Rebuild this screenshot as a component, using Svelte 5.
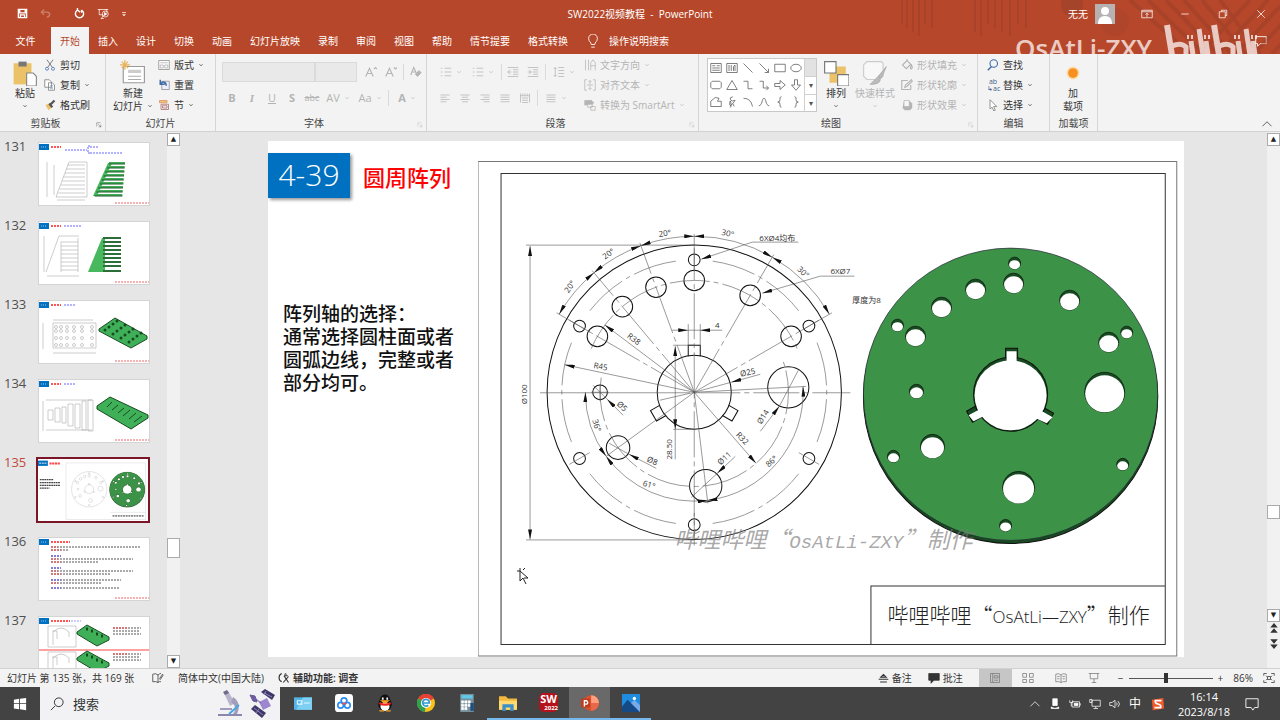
<script lang="ts">
	const tabs = ['插入', '设计', '切换', '动画', '幻灯片放映', '录制', '审阅', '视图', '帮助', '情节提要', '格式转换'];
	const slides = [131, 132, 133, 134, 135, 136, 137];
	const current = 135;
	let zoom = 44;

	// drawing geometry, centre of the flange and pixels per millimetre
	const cx = 694;
	const cy = 392;
	const mm = 2.94;

	function at(r: number, deg: number): [number, number] {
		const a = (deg * Math.PI) / 180;
		return [cx + r * mm * Math.cos(a), cy - r * mm * Math.sin(a)];
	}

	function arc(r: number, from: number, to: number) {
		const [x1, y1] = at(r, from);
		const [x2, y2] = at(r, to);
		return `M${x1} ${y1}A${r * mm} ${r * mm} 0 0 ${to > from ? 0 : 1} ${x2} ${y2}`;
	}

	function ray(r1: number, r2: number, deg: number) {
		const [x1, y1] = at(r1, deg);
		const [x2, y2] = at(r2, deg);
		return `M${x1} ${y1}L${x2} ${y2}`;
	}

	const holes = [
		...[30, 90, 150, 210, 270, 330].map((a) => [45, a, 2]),
		...[30, 60, 90, 110, 130, 150].map((a) => [38, a, 3.5]),
		[32, 180, 2.5],
		[32, 216, 4],
		[32, 277, 5.5],
		[32, 3, 7]
	];

	const plateHoles = [
		[1014, 263, 6], [1013, 283, 10], [975, 289, 10], [941, 307, 10], [915, 336, 10],
		[897, 325, 6], [1069, 300, 10], [1108, 342, 10], [1126, 332, 6], [1104, 392, 20],
		[916, 391, 7], [932, 446, 12], [1018, 487, 16], [893, 456, 6], [1122, 464, 6], [1005, 525, 6]
	];

	// leaders that end in an arrow
	const leaders = [
		'M798 242h-46l-51 17', 'M854 276h-34l-58 17', 'M672 330h16', 'M722 330h-22', 'M760 431l19-25',
		'M735 456l-18 17', 'M623 415l-16-16', 'M656 468l-27-14', 'M760 374l-29 8',
		ray(0, 38, 143), ray(0, 45, 168), ray(0, 32, 311)
	];

	const spans = [
		'M530 246v293', 'M675 346v83',
		arc(53, 90, 110), arc(53, 110, 130), arc(53, 130, 150), arc(53, 60, 90), arc(53, 30, 60),
		arc(37, 180, 216), arc(37, 216, 277), arc(37, 277, 363)
	];

	const dims: [string, number, number, number][] = [
		['20°', 665, 236, -8], ['20°', 610, 256, -36], ['20°', 572, 288, -56],
		['30°', 727, 236, 12], ['30°', 801, 274, 44], ['R38', 632, 341, 37], ['R45', 600, 369, 10],
		['Ø100', 527, 394, -90], ['Ø5', 620, 408, 45], ['36°', 594, 426, 72], ['Ø8', 651, 463, 22],
		['61°', 648, 487, 18], ['28.50', 672, 449, -90], ['Ø25', 748, 375, -12], ['4', 717, 328, 0],
		['Ø14', 765, 418, -58], ['R32', 740, 440, 46], ['86°', 773, 463, -42], ['Ø11', 726, 460, -42],
		['6XØ4均布', 777, 241, 0], ['6XØ7', 840, 274, 0], ['厚度为8', 866, 303, 0]
	];

	const grey = '#b4b4b4';
	const icons: Record<string, string> = {
		save: '<path d="M2 2h12v12H2zM4 2v5h8V2M5 14v-4h6v4" stroke-width="2"/>',
		undo: '<path d="M2 6h8q4 0 4 3.500t-4 3.500M6 2 2 6l4 4" stroke-width="2"/>',
		redo: '<path d="M5 3a6 6 0 1 0 6 0M5 3V0M5 3l4 3M11 3v4" stroke-width="2"/>',
		show: '<path d="M1 2h14M3 2v7h5M13 2v4M6 14l3-5M5 14h4"/><circle cx="11" cy="8" r="4"/><path d="m10 6 3 2-3 2z" fill="currentColor"/>',
		more: '<path d="M3 4h10" stroke-width="2"/><path d="m4 9 4 4 4-4z" fill="currentColor"/>',
		display: '<path d="M1 3h14v10H1zM1 5h14M8 12V7M6 9l2-2 2 2"/>',
		min: '<path d="M3 8h10"/>',
		restore: '<path d="M3 5h8v8H3zM6 5V3h7v7h-2"/>',
		close: '<path d="m3 3 10 10M13 3 3 13"/>',
		bulb: '<path d="M6 12c0-3-3-3-3-7a5 5 0 0 1 10 0c0 4-3 4-3 7zM6 15h4"/>',
		bubble: '<path d="M2 3h12v8H7l-3 3v-3H2z"/>',
		caret: '<path d="m4 6 4 4 4-4" stroke-width="2"/>',
		launch: '<path d="M2 12V2h10M6 6l7 7M13 7v6H7"/>',
		paste: '<path d="M1 2h11v13H1z" fill="#ebc267" stroke="none"/><path d="M4 1h5v3H4z" fill="#777" stroke="none"/><path d="M9 8h4l2 2v6H9z" fill="#fff" stroke="#888" stroke-width=".7"/>',
		cut: '<path d="M4 1l7 10M12 1 5 11" stroke="#555"/><circle cx="4" cy="13" r="2" stroke="#3f6ca8"/><circle cx="12" cy="13" r="2" stroke="#3f6ca8"/>',
		copy: '<path d="M1 1h6l3 3v7H1zM6 5h5l3 3v7H6z" fill="#fff" stroke="#777"/><path d="M8 9h4M8 11h4M8 13h4" stroke="#7b9cc4"/>',
		brush: '<path d="m2 8 5-2 4 5-5 4z" fill="#ebc267" stroke="none"/><path d="m7 6 4 5M9 7l5-5" stroke="#555" stroke-width="3"/>',
		newslide: '<path d="M2 4h13v10H2z" fill="#fff" stroke="#999" stroke-width=".7"/><path d="M5 6h8v2H5z" fill="#ccc" stroke="none"/><path d="M5 10h8M5 12h8" stroke="#aaa" stroke-width=".6"/><path d="M3 0v6M0 3h6M1 1l4 4M5 1 1 5" stroke="#e9b45b" stroke-width=".8"/>',
		layout: '<path d="M1 2h14v12H1z" fill="#fff" stroke="#888"/><path d="M3 5h10M3 8h4v4H3zM9 8h4v4H9z" stroke="#aaa"/>',
		reset: '<path d="M5 3h10v11H5z" fill="#eef" stroke="#888"/><path d="M3 1v6h6M3 7c3-5 8-3 8 2" stroke="#3f6ca8" stroke-width="2"/>',
		section: '<path d="M2 2h10v3H2z" fill="#f3c57c" stroke="#d88b55"/><path d="M4 7h10v7H4zM6 9h6v3H6z" stroke="#a66"/>',
		grow: `<path d="M1 14 6 3l5 11M3 10h6M12 4l2-2 2 2" stroke="${grey}" stroke-width="1.500"/>`,
		shrink: `<path d="M1 14 6 3l5 11M3 10h6M12 2l2 2 2-2" stroke="${grey}" stroke-width="1.500"/>`,
		eraser: `<path d="M1 12 5 2l4 9M3 8h5" stroke="${grey}" stroke-width="1.500"/><path d="m7 11 5-5 3 3-5 5z" fill="${grey}" stroke="${grey}"/>`,
		bullets: `<path d="M1 3h2M1 8h2M1 13h2M6 3h9M6 8h9M6 13h9" stroke="${grey}"/>`,
		outdent: `<path d="M1 2h14M8 5h7M8 8h7M8 11h7M1 14h14M6 8H1M4 5 1 8l3 3" stroke="${grey}"/>`,
		indent: `<path d="M1 2h14M8 5h7M8 8h7M8 11h7M1 14h14M1 8h5M3 5l3 3-3 3" stroke="${grey}"/>`,
		spacing: `<path d="M7 2h8M7 6h8M7 10h8M7 14h8M3 2v12M1 4l2-2 2 2M1 12l2 2 2-2" stroke="${grey}"/>`,
		left: `<path d="M2 4h12M2 7h8M2 10h12M2 13h8" stroke="${grey}"/>`,
		center: `<path d="M2 4h12M4 7h8M2 10h12M4 13h8" stroke="${grey}"/>`,
		right: `<path d="M2 4h12M6 7h8M2 10h12M6 13h8" stroke="${grey}"/>`,
		justify: `<path d="M2 4h12M2 7h12M2 10h12M2 13h12" stroke="${grey}"/>`,
		spread: `<path d="M2 2v12M14 2v12M2 5h12M4 8h8M4 11h8M4 14h8M5 2v3M8 2v3M11 2v3" stroke="${grey}"/>`,
		direction: `<path d="M2 1v14M6 1v14M9 15V5l3-4 3 4v10M9 9h6" stroke="${grey}"/>`,
		align: `<path d="M4 1H1v14h3M12 1h3v14h-3M8 2v5M6 4l2-2 2 2M8 14V9M6 12l2 2 2-2M4 8h8" stroke="${grey}"/>`,
		smart: `<path d="M1 2h9l3 3-3 3H1z" fill="${grey}" stroke="${grey}"/><path d="M5 7h6v4H5zM9 10h6v5H9z" fill="#f3f3f3" stroke="${grey}"/>`,
		arrange: '<path d="M8 4h6v6H8zM4 8h6v6H4z" fill="#ebc267" stroke="none"/><path d="M1 1h7v7H1zM9 9h7v7H9z" fill="#fff" stroke="#777" stroke-width=".7"/>',
		quick: `<path d="M3 1h9l1 1v8l-3 2H3l-2-2V3z" fill="#f8f8f8" stroke="#ccc" stroke-width=".7"/><path d="m15 4-3 7-2-1zM10 10q2 1 1 3t-6 2q3-3 5-5z" fill="#bbb" stroke="#aaa" stroke-width=".5"/>`,
		fill: `<path d="m3 7 5-5 5 5-6 6-5-5zM8 2V0M14 8q2 4 0 5t-1-3z" stroke="${grey}" stroke-width="1.500"/>`,
		outline: `<path d="M9 2H1v12h12V8M5 11l1-3 8-7 1 2-7 7z" stroke="${grey}" stroke-width="1.500"/>`,
		effect: `<path d="M4 3h8l3 3v6l-3 3H5l-3-3z" fill="${grey}" stroke="none"/><path d="M4 2h7v8H4z" fill="#f6f6f6" stroke="${grey}"/>`,
		find: '<circle cx="9" cy="6" r="5" stroke="#3f6ca8" stroke-width="1.500"/><path d="m6 10-5 5" stroke="#3f6ca8" stroke-width="2"/>',
		pointer: '<path d="m4 1 9 9H9l2 5-2 1-2-5-3 2z" fill="#fff" stroke="#777"/>',
		sun: '<circle cx="8" cy="8" r="4" fill="#fbdcab" stroke="none"/><circle cx="8" cy="8" r="3" fill="#f7901e" stroke="none"/>',
		up: '<path d="m2 11 6-6 6 6"/>',
		jumpUp: '<path d="m8 0 5 6H3zM8 7l5 6H3z" fill="#333" stroke="none"/>',
		jumpDown: '<path d="m8 9 5-6H3zM8 16l5-6H3z" fill="#333" stroke="none"/>',
		book: '<path d="M8 4Q5 1 1 3v10q4-1 7 1 2-2 4-1M8 4v10M8 4q2-2 4-2M10 9l4-6 1 1-4 6z"/>',
		access: '<path d="M5 2a6 6 0 0 0 0 11M8 5l6 9M14 6l-7 8M8 5h5" stroke-width="1.500"/><circle cx="10" cy="3" r="1"/>',
		notes: '<path d="M1 9h14M3 13h10M4 6l4-4 4 4z" stroke-width="1.500"/>',
		comment: '<path d="M1 2h14v9H8l-4 4v-4H1z" fill="currentColor"/>',
		normal: '<path d="M2 2h12v12H2zM5 2v12M7 5h5v3H7zM7 11h5"/>',
		sorter: '<path d="M1 2h5v5H1zM10 2h5v5h-5zM1 10h5v4H1zM10 10h5v4h-5z"/>',
		reading: '<path d="M8 4Q5 1 1 3v10q4-1 7 1 3-2 7-1V3q-4-2-7 1v10M3 6h3M3 9h3M10 6h3M10 9h3"/>',
		present: '<path d="M1 2h14M3 2v7h10V2M8 9v5M5 14h6"/>',
		fit: '<path d="M1 5V2h4M11 2h4v3M15 11v3h-4M5 14H1v-3M4 5l2 2M12 5l-2 2M4 11l2-2M12 11l-2-2M6 6h4v4H6z"/>',
		windows: '<path d="m1 3 6-1v5H1zM8 2l7-1v6H8zM1 8h6v6l-6-1zM8 8h7v7l-7-1z" fill="#fff" stroke="none"/>',
		search: '<circle cx="10" cy="6" r="5"/><path d="m6 10-5 5"/>',
		card: '<path d="M0 3h16v11H0z" fill="#52b7e8" stroke="none"/><path d="M8 3h8v11H2z" fill="#7dd0f2" stroke="none"/><path d="M3 6h4v3H3zM9 8h5" stroke="#e6f6ff"/>',
		cloud: '<rect width="16" height="16" rx="3" fill="#fff" stroke="none"/><circle cx="5" cy="10" r="2.500" stroke="#2b8cf0" stroke-width="1.500"/><circle cx="11" cy="10" r="2.500" stroke="#2b8cf0" stroke-width="1.500"/><circle cx="8" cy="6" r="2.500" stroke="#2b8cf0" stroke-width="1.500"/><path d="M7 9a2 2 0 0 1 3 0" stroke="#f04f5a" stroke-width="1.500"/>',
		qq: '<ellipse cx="8" cy="9" rx="6" ry="6" fill="#111" stroke="none"/><circle cx="8" cy="5" r="4.500" fill="#111" stroke="none"/><ellipse cx="8" cy="11" rx="4" ry="4" fill="#fff" stroke="none"/><path d="M3 8q5 3 10 0" stroke="#e22" stroke-width="2"/><path d="M6 3v2M10 3v2" stroke="#fff" stroke-width="1.500"/><path d="M5 6h6l-3 2zM3 15h4M9 15h4" fill="#f5a623" stroke="#f5a623"/>',
		chrome: '<circle cx="8" cy="8" r="8" fill="#fbc116" stroke="none"/><path d="M8 8 1 4a8 8 0 0 1 14 0z" fill="#e64132" stroke="none"/><path d="M8 8 1 4a8 8 0 0 0 6 12z" fill="#2fa14f" stroke="none"/><circle cx="8" cy="8" r="4.500" fill="#fff" stroke="none"/><path d="M5 8h6a3 3 0 1 0-1 2" stroke="#2f9bd0" stroke-width="1.500"/>',
		calc: '<path d="M2 0h12v16H2z" fill="#77909d" stroke="none"/><path d="M3 1h10v3H3z" fill="#5fc9e8" stroke="none"/><path d="M3 6h2v2H3zM6 6h2v2H6zM9 6h2v2H9zM3 9h2v2H3zM6 9h2v2H6zM9 9h2v2H9zM3 12h2v2H3zM6 12h2v2H6z" fill="#fff" stroke="#fff" stroke-width=".5"/><path d="M11 8h3v7h-3z" fill="#1e4d80" stroke="none"/>',
		folder: '<path d="M0 2h6l2 2h8v10H0z" fill="#f3b83d" stroke="none"/><path d="M0 6h16v8H0z" fill="#ffd972" stroke="none"/><path d="M3 15V9h10v6h-3v-3H6v3z" fill="#3c8fc7" stroke="none"/>',
		powerpoint: '<circle cx="9" cy="8" r="7" fill="#d9522f" stroke="none"/><path d="M9 1a7 7 0 0 1 7 7H9z" fill="#ff9f80" stroke="none"/><path d="M9 15a7 7 0 0 0 7-7H9z" fill="#e8694a" stroke="none"/><rect y="4" width="8" height="8" rx="1" fill="#bf3c1d" stroke="none"/><path d="M3 11V6h2q2 2 0 3H3" stroke="#fff" stroke-width="1.200"/>',
		photos: '<path d="M0 0h16v16H0z" fill="#1e8de0" stroke="none"/><path d="m0 11 5-6 11 11H0z" fill="#154a86" stroke="none"/><path d="m8 8 3-3 5 5v6z" fill="#7aa9e8" stroke="none"/><circle cx="11" cy="4" r="1.500" fill="#fff" stroke="none"/>',
		mic: '<path d="M5 1h6v9H5z" fill="#fff"/><path d="M3 12q5 4 10 0v2H3z" fill="#fff"/>',
		battery: '<path d="M4 5h10v7H4zM15 7v3M1 3v3h4V3M3 6v5"/><path d="M7 7h5v3H7z" fill="currentColor"/>',
		network: '<path d="M4 3h11v8H4zM9 11v3M6 14h6M1 2h3v4H1z"/>',
		sound: '<path d="M1 6h3l4-3v10L4 10H1zM10 6q2 2 0 4M12 4q4 4 0 8"/>',
		sogou: '<path d="m1 3 13-2 1 12-13 2z" fill="#ee5a2b" stroke="none"/><path d="M12 4H5q-1 3 3 4t3 4H4" stroke="#fff" stroke-width="2"/>',
		note: '<path d="M1 2h14v10h-4l-2 3-2-3H1z"/>'
	};

	const shapes = [
		'M1 2h14v12H1zM3 5h4M9 5h4M3 8h10M3 11h10', 'M1 2h14v12H1zM4 4v8M7 4v8M10 12V6l2-2v8',
		'm2 2 12 12', 'm2 2 12 12M14 9v5H9', 'M1 3h14v10H1z', 'M1 8a7 5 0 1 0 14 0a7 5 0 1 0-14 0',
		'M3 3h10l2 2v6l-2 2H3l-2-2V5z', 'M8 2 15 14H1z', 'M2 3h6v10h6', 'M2 3h5v9h7M11 9l3 3-3 3',
		'M1 6h7V2l7 6-7 6v-4H1z', 'M6 1h4v7h4l-6 7-6-7h4z',
		'M1 7l6-5 5 1-2 4h5v7H1z', 'M9 1Q4 2 6 5t5 1-2 4-4-1 2 5l-2 1M9 10l2 4', 'M2 3q10 0 12 11',
		'M1 13C6 13 5 3 8 3s2 10 7 10', 'M10 1Q7 1 8 5 8 8 5 8 8 8 8 11 7 15 10 15', 'M6 1Q9 1 8 5 8 8 11 8 8 8 8 11 9 15 6 15'
	];

	const apps = ['card', 'cloud', 'qq', 'chrome', 'calc', 'folder', 'solidworks', 'powerpoint', 'photos'];
	const running = ['folder', 'solidworks', 'powerpoint', 'photos'];
</script>

{#snippet icon(name: string, size = '')}
	<svg class="icon {size}" viewBox="0 0 16 16" aria-hidden="true">{@html icons[name]}</svg>
{/snippet}

{#snippet command(name: string, label: string, caret = false)}
	<button class="command">
		{@render icon(name, 'mid')}
		<span>{label}</span>
		{#if caret}{@render icon('caret', 'tiny')}{/if}
	</button>
{/snippet}

{#snippet outline()}
	<g class="solid">
		<circle {cx} {cy} r="147" />
		{#each holes as [r, a, size]}
			<circle cx={at(r, a)[0]} cy={at(r, a)[1]} r={size * mm} />
		{/each}
		<circle {cx} {cy} r="37" />
		{#each [0, 120, 240] as turn}
			<path d="M688 356V345H700V356" transform="rotate({turn} {cx} {cy})" />
		{/each}
	</g>
{/snippet}

{#snippet plate()}
	<ellipse cx="1010" cy="397" rx="147" ry="146" fill="#174a20" stroke="#111" />
	<ellipse cx="1010" cy="394" rx="147" ry="146" fill="#3c9347" stroke="#223" stroke-width=".7" />
	{#each plateHoles as [x, y, r]}
		<circle cx={x} cy={y} {r} fill="#174a20" stroke="#111" stroke-width=".7" />
		<ellipse cx={x} cy={y + 1.5} rx={r - 0.5} ry={r - 1.5} fill="#fff" />
	{/each}
	<path d="M1005 348h12v14h-12zM966 411l14-8 6 11-14 8zM1053 413l-14-8-6 11 14 8z" fill="#174a20" stroke="#111" />
	<circle cx="1010" cy="394" r="37" fill="#174a20" stroke="#111" />
	<path d="M1006 351h10v14h-10zM968 415l13-7 4 7-12 6zM1052 417l-14-8-5 8 13 6z" fill="#fff" />
	<ellipse cx="1010" cy="395" rx="36" ry="35" fill="#fff" />
{/snippet}

<div class="window">
	<header>
		<svg class="streaks" viewBox="0 0 400 54" aria-hidden="true">
			<g stroke="#96402b" stroke-width="2" opacity=".45">
				{#each [22, 27, 33, 39, 45, 52, 95, 101, 108, 115, 122, 130, 138, 146] as x, i}
					<path d="M{x} 0V{24 + (i % 4) * 4}" />
				{/each}
				{#each [0, 1, 2, 3, 4, 5] as i}
					<path d="M{250 + i * 18} 0l{60 - i * 4} 54M{320 + i * 18} 54 {370 + i * 18} 0" stroke-width="4" />
				{/each}
			</g>
			<circle cx="192" cy="5" r="11" fill="#96402b" opacity=".5" />
			<circle cx="235" cy="22" r="14" fill="#96402b" opacity=".25" />
		</svg>
		<div class="titlebar">
			<div class="quick">
				<button aria-label="保存">{@render icon('save', 'small')}</button>
				<button class="faded" aria-label="撤消">{@render icon('undo', 'small')}</button>
				<button aria-label="重复">{@render icon('redo', 'small')}</button>
				<button aria-label="放映">{@render icon('show', 'mid')}</button>
				<button aria-label="自定义">{@render icon('more', 'tiny')}</button>
			</div>
			<div class="title">SW2022视频教程&nbsp; -&nbsp; PowerPoint</div>
			<div class="account">
				<span>无无</span>
				<svg class="avatar" viewBox="0 0 20 20" aria-hidden="true">
					<path d="M0 0h20v20H0z" fill="#b5b2b1" />
					<circle cx="10" cy="7" r="4" fill="#fff" />
					<path d="M3 20q0-8 7-8t7 8z" fill="#fff" />
				</svg>
				<button aria-label="功能区显示选项">{@render icon('display', 'mid')}</button>
				<button aria-label="最小化">{@render icon('min', 'mid')}</button>
				<button aria-label="还原">{@render icon('restore', 'mid')}</button>
				<button aria-label="关闭">{@render icon('close', 'mid')}</button>
			</div>
		</div>
		<nav>
			<button class="file">文件</button>
			<button class="open">开始</button>
			{#each tabs as tab}
				<button>{tab}</button>
			{/each}
			<button class="tell">{@render icon('bulb', 'big')}操作说明搜索</button>
			<button class="feedback" aria-label="批注">{@render icon('bubble', 'big')}</button>
		</nav>
		<div class="brand">
			<span>OsAtLi-ZXY</span>
			<svg viewBox="0 0 95 32" aria-hidden="true">
				{#each [0, 47] as shift}
					<g transform="translate({shift} 0)">
						<path d="M4 1 9 31" stroke-width="6" />
						<path d="M9 22q9-4 14 1v9M28 17l2 14M36 5l4 26M43 17l2 14" stroke-width="5" />
						<path d="M25 11v4M29 11v4M42 11v4M46 11v4" stroke-width="2" />
					</g>
				{/each}
			</svg>
		</div>
	</header>

	<section class="ribbon">
		<div class="group">
			<div class="body clip clipboard">
				<button class="large">{@render icon('paste', 'huge')}<span>粘贴</span>{@render icon('caret', 'tiny')}</button>
				<div class="stack">
					{@render command('cut', '剪切')}
					{@render command('copy', '复制', true)}
					{@render command('brush', '格式刷')}
				</div>
			</div>
			<footer>剪贴板</footer>
			<span class="launch">{@render icon('launch', 'tiny')}</span>
		</div>
		<div class="group">
			<div class="body clip pages">
				<button class="large">{@render icon('newslide', 'huge')}<span>新建</span><span class="line">幻灯片{@render icon('caret', 'tiny')}</span></button>
				<div class="stack">
					{@render command('layout', '版式', true)}
					{@render command('reset', '重置')}
					{@render command('section', '节', true)}
				</div>
			</div>
			<footer>幻灯片</footer>
		</div>
		<div class="group off">
			<div class="body rows">
				<div class="row">
					<select class="family" aria-label="字体" disabled><option></option></select>
					<select class="points" aria-label="字号" disabled><option></option></select>
					<button disabled aria-label="增大字号">{@render icon('grow', 'mid')}</button>
					<button disabled aria-label="减小字号">{@render icon('shrink', 'mid')}</button>
					<i class="rule"></i>
					<button disabled aria-label="清除格式">{@render icon('eraser', 'mid')}</button>
				</div>
				<div class="row letters">
					<button disabled><b>B</b></button>
					<button disabled><em>I</em></button>
					<button disabled><u>U</u></button>
					<button disabled><b>S</b></button>
					<button disabled><s>abc</s></button>
					<button class="wide" disabled>AV{@render icon('caret', 'tiny')}</button>
					<button class="wide" disabled>Aa{@render icon('caret', 'tiny')}</button>
					<i class="rule"></i>
					<button class="wide" disabled><b>A</b>{@render icon('caret', 'tiny')}</button>
				</div>
			</div>
			<footer>字体</footer>
			<span class="launch">{@render icon('launch', 'tiny')}</span>
		</div>
		<div class="group off">
			<div class="body clip para">
				<div class="rows">
					<div class="row">
						<button class="wide" disabled aria-label="项目符号">{@render icon('bullets', 'mid')}{@render icon('caret', 'tiny')}</button>
						<button class="wide" disabled aria-label="编号">{@render icon('bullets', 'mid')}{@render icon('caret', 'tiny')}</button>
						<i class="rule"></i>
						<button disabled aria-label="降低级别">{@render icon('outdent', 'mid')}</button>
						<button disabled aria-label="提高级别">{@render icon('indent', 'mid')}</button>
						<i class="rule"></i>
						<button class="wide" disabled aria-label="行距">{@render icon('spacing', 'mid')}{@render icon('caret', 'tiny')}</button>
					</div>
					<div class="row">
						{#each ['left', 'center', 'right', 'justify', 'spread'] as name}
							<button disabled aria-label={name}>{@render icon(name, 'mid')}</button>
						{/each}
						<i class="rule"></i>
						<button class="wide" disabled aria-label="分栏">{@render icon('justify', 'mid')}{@render icon('caret', 'tiny')}</button>
					</div>
				</div>
				<div class="stack">
					{@render command('direction', '文字方向', true)}
					{@render command('align', '对齐文本', true)}
					{@render command('smart', '转换为 SmartArt', true)}
				</div>
			</div>
			<footer>段落</footer>
			<span class="launch">{@render icon('launch', 'tiny')}</span>
		</div>
		<div class="group">
			<div class="body clip draw">
				<div class="gallery">
					<div class="shapes">
						{#each shapes as d}
							<svg class="icon mid" viewBox="0 0 16 16" aria-hidden="true"><path {d} /></svg>
						{/each}
					</div>
					<div class="spin"><span></span><span>▾</span><span>▾</span></div>
				</div>
				<button class="large">{@render icon('arrange', 'huge')}<span>排列</span>{@render icon('caret', 'tiny')}</button>
				<button class="large off">{@render icon('quick', 'huge')}<span>快速样式</span>{@render icon('caret', 'tiny')}</button>
				<div class="stack off">
					{@render command('fill', '形状填充', true)}
					{@render command('outline', '形状轮廓', true)}
					{@render command('effect', '形状效果', true)}
				</div>
			</div>
			<footer>绘图</footer>
			<span class="launch off">{@render icon('launch', 'tiny')}</span>
		</div>
		<div class="group">
			<div class="body stack edit">
				{@render command('find', '查找')}
				<button class="command"><span class="swap">ab<br />↳ac</span><span>替换</span>{@render icon('caret', 'tiny')}</button>
				{@render command('pointer', '选择', true)}
			</div>
			<footer>编辑</footer>
		</div>
		<div class="group">
			<div class="body clip addin">
				<button class="large">{@render icon('sun', 'huge')}<span>加</span><span class="line">载项</span></button>
			</div>
			<footer>加载项</footer>
		</div>
		<button class="collapse" aria-label="折叠功能区">{@render icon('up', 'mid')}</button>
	</section>

	<main>
		<aside>
			{#each slides as n}
				<div class="slot" class:current={n === current}>
					<span>{n}</span>
					{#if n === current}
						<svg class="thumb" viewBox="268 141 915 515" aria-hidden="true">
							<path d="M268 154h82v44h-82z" fill="#0070c0" />
							<path d="M278 176h60" stroke="#9cc6e6" stroke-width="12" stroke-dasharray="16 6" />
							<path d="M363 178h89" stroke="#f44" stroke-width="16" stroke-dasharray="18 5" />
							<path d="M283 313h115M283 337h171M283 360h171M283 383h80" stroke="#444" stroke-width="10" stroke-dasharray="15 4" />
							<path d="M501 173h663v471H501zM870 585h294" fill="none" stroke="#aaa" stroke-width="2" />
							<path d="M888 614h258" stroke="#888" stroke-width="14" stroke-dasharray="16 6" />
							{@render outline()}
							{@render plate()}
						</svg>
					{:else}
						<svg class="thumb" viewBox="0 0 110 62" aria-hidden="true">
							<path d="M0 1h10v6H0z" fill="#0070c0" />
							<path d="M2 4h6" stroke="#9cc6e6" stroke-dasharray="1 1" />
							<path d="M12 4h{n > 135 ? 19 : 10}" stroke="#f55" stroke-width="2" stroke-dasharray="2 1" />
							{#if n < 136}
								<path d="M{n === 131 ? 26 : 25} {n === 131 ? 7 : 4}h{n === 131 ? 22 : n === 132 ? 17 : 11}" stroke="#66f" stroke-dasharray="2 1" />
							{/if}
							{#if n < 137}
								<path d="M76 60h34" stroke="#e66" stroke-dasharray="2 1" />
							{/if}
							{#if n === 131}
								<path d="M51 3h-2v7h2M51 4h9M51 10h33" class="blue" />
								<path d="M8 19v35M17 54 30 19h18v35zM18 57h28M15 22v30" class="thin" />
								{#each [22, 26, 30, 34, 38, 42, 46, 50] as y}<path d="M{36 - y / 3} {y}H46" class="thin" />{/each}
								<path d="M54 53 69 20h4L58 53z" fill="#48b85e" />
								{#each [0, 1, 2, 3, 4, 5, 6, 7, 8] as i}
									<path d="M{70 - i * 1.8} {20 + i * 4}H{86 - i / 3}" stroke="#43ad59" stroke-width="2" />
									<path d="M{70 - i * 1.8} {21 + i * 4}H{86 - i / 3}" stroke="#205a2c" stroke-width="1" />
								{/each}
							{:else if n === 132}
								<path d="M5 14v36M7 50 20 14h20M22 20v30M39 16v34M8 54h32" class="thin" />
								{#each [20, 24, 28, 32, 36, 40, 44, 48] as y}<path d="M22 {y}H39" class="thin" />{/each}
								<path d="M49 50 63 16h3v34z" fill="#48b85e" />
								{#each [16, 20, 24, 28, 32, 36, 40, 44, 49] as y}<path d="M64 {y}H82" stroke="#2d6d3a" stroke-width="2" />{/each}
							{:else if n === 133}
								<path d="M14 22h43v25H14zM4 22v26M14 52h43M14 19h40" class="thin" />
								{#each [17, 22, 28, 35, 43, 53] as x}
									{#each [26, 30, 37, 44] as y}<circle cx={x} cy={y} r="1.500" class="thin" />{/each}
								{/each}
								<path d="m60 28 16-11 32 18v3L92 47 60 30z" fill="#3fb058" stroke="#1c4d27" />
								{#each [0, 1, 2, 3] as r}
									{#each [0, 1, 2, 3] as c}<circle cx={66 + c * 8 + r * 4} cy={29 + c * 4 - r * 3} r="1.500" fill="#174a20" />{/each}
								{/each}
							{:else if n === 134}
								<path d="M4 21v30M7 20h46M7 50h46M9 30h5v10H9zM16 28h5v14h-5zM23 27h4v16h-4zM29 24h5v22h-5zM36 24h5v24h-5zM43 21h4v29h-4zM49 20h5v31h-5z" class="thin" />
								<path d="m58 26 13-9 38 18v3L92 49 58 29z" fill="#3fb058" stroke="#174a20" />
								<path d="M73 22l-5 5M79 25l-6 5M85 28l-6 5M91 30l-7 6M97 33l-7 6M103 36l-8 6" stroke="#174a20" stroke-width="1" fill="none" />
							{:else if n === 136}
								{#each [9, 12, 18, 21, 24, 30, 33, 36, 42, 45, 50] as y, i}
									<path d="M12 {y}h{[90, 18, 10, 82, 48, 10, 82, 60, 70, 50, 68][i]}" stroke="#555" stroke-dasharray="2 1" />
									<path d="M12 {y}h{i % 3 ? 10 : 7}" stroke={[2, 5, 8, 10].includes(i) ? '#55f' : '#f44'} stroke-dasharray="2 1" />
								{/each}
							{:else}
								<path d="M32 4h10" stroke="#99f" stroke-dasharray="2 1" />
								<path d="M0 33h110" stroke="#f44" />
								{#each [0, 26] as y}
									<g transform="translate(0 {y})">
										<path d="M9 9h28v21H9zM14 28V15q8-8 16 0v5M13 14h5v8" class="thin" />
										<path d="m38 15 10-7 22 12v3l-12 6-20-12z" fill="#3fb058" stroke="#1c4d27" />
										<path d="M47 12h2M52 14h2M57 17h2M62 19h2" stroke="#174a20" stroke-width="3" />
										<path d="M74 11h28M74 14h26M74 17h28" stroke="#555" stroke-dasharray="2 1" />
										<path d="M74 11h14" stroke="#f44" stroke-dasharray="2 1" />
									</g>
								{/each}
							{/if}
						</svg>
					{/if}
				</div>
			{/each}
		</aside>
		<div class="scroll">
			<button aria-label="向上">▲</button>
			<i class="before"></i><i class="grip"></i><i class="after"></i>
			<button aria-label="向下">▼</button>
		</div>

		<div class="stage">
			<article class="slide">
				<div class="notes">
					<div class="heading">
						<span class="badge">4-39</span>
						<h1>圆周阵列</h1>
					</div>
					<p>阵列轴的选择：<br />通常选择圆柱面或者<br />圆弧边线，完整或者<br />部分均可。</p>
				</div>
				<svg class="drawing" viewBox="478 141 705 515">
					<defs>
						<marker id="tip" viewBox="0 0 10 4" refX="10" refY="2" markerWidth="10" markerHeight="4" markerUnits="userSpaceOnUse" orient="auto-start-reverse">
							<path d="M0 0 10 2 0 4z" fill="#111" />
						</marker>
					</defs>
					<path d="M478 161.500h698v494H478z" fill="none" stroke="#777" />
					<path d="M501 173.500h663.500v470.500H501zM870.500 644V585.500H1164" fill="none" stroke="#333" />
					{@render plate()}
					{@render outline()}
					<g class="thin">
						<path d="M526 245h168M526 539.500h168M540 392.500h150" />
						<path d="M694 392.500H850M694 234V545" stroke-dasharray="46 4 5 4" />
						<path d={arc(38, 157, 23)} stroke-dasharray="40 4 5 4" />
						<path d="{arc(32, 171, 277)}{arc(32, 277, 380)}" stroke-dasharray="44 4 5 4" />
						{#each [0, 60, 120, 180, 240, 300] as a}
							<path d="{arc(45, a + 38, a + 57)}{arc(45, a + 59, a + 61)}{arc(45, a + 63, a + 82)}" />
							<path d={ray(41, 49, a + 30)} />
						{/each}
						{#each [30, 60, 110, 130, 150] as a}
							<path d={ray(0, 54, a)} stroke-dasharray="50 4 5 4" />
						{/each}
						<path d="{ray(0, 37, 216)}{ray(0, 38, 277)}{ray(0, 38, 3)}{ray(0, 12, 193)}{ray(29, 35, 180)}" />
						<path d="M600 384v17M673 345h21M673 429h21M675 429v30M688 324v21M700 324v21M688 330h12" />
						<path d="M607 399l-14-14M629 454l-20-11M717 473l-26 24M779 406l19-36M694 392l37-10" />
					</g>
					{#each leaders as d}
						<path {d} class="thin" marker-end="url(#tip)" />
					{/each}
					{#each spans as d}
						<path {d} class="thin" marker-start="url(#tip)" marker-end="url(#tip)" />
					{/each}
					{#each dims as [label, x, y, turn]}
						<text class="dim" {x} {y} transform="rotate({turn} {x} {y})">{label}</text>
					{/each}
					<text class="water" x="674" y="548">哔哩哔哩“<tspan>OsAtLi-ZXY</tspan>”制作</text>
					<text class="maker" x="887" y="622">哔哩哔哩“<tspan>OsAtLi—ZXY</tspan>”制作</text>
				</svg>
			</article>
			<svg class="cursor" viewBox="0 0 16 20" aria-hidden="true">
				<path d="M4 5v10l3-3 3 6M4 5l8 7H8M1 5h3M4 2v3M7 4l2-2" fill="none" stroke="#222" />
			</svg>
		</div>
		<div class="scroll right">
			<button aria-label="上一页">▲</button>
			<i class="before"></i><i class="grip"></i><i class="after"></i>
			<button aria-label="下一页">▼</button>
			<button class="jump" aria-label="上一张幻灯片">{@render icon('jumpUp', 'mid')}</button>
			<button class="jump" aria-label="下一张幻灯片">{@render icon('jumpDown', 'mid')}</button>
		</div>
	</main>

	<div class="status">
		<span class="count">幻灯片 第 135 张，共 169 张</span>
		{@render icon('book', 'mid')}
		<span class="lang">简体中文(中国大陆)</span>
		{@render icon('access', 'mid')}
		<b>辅助功能: 调查</b>
		<div class="views">
			<button class="text">{@render icon('notes', 'small')}备注</button>
			<button class="text">{@render icon('comment', 'mid')}批注</button>
			<button class="view active" aria-label="普通">{@render icon('normal', 'mid')}</button>
			<button class="view" aria-label="浏览">{@render icon('sorter', 'mid')}</button>
			<button class="view" aria-label="阅读">{@render icon('reading', 'mid')}</button>
			<button class="view" aria-label="放映">{@render icon('present', 'mid')}</button>
			<button class="minus" aria-label="缩小">−</button>
			<input type="range" min="0" max="100" bind:value={zoom} aria-label="缩放" />
			<button aria-label="放大">+</button>
			<span class="percent">86%</span>
			<button aria-label="适应窗口">{@render icon('fit', 'mid')}</button>
		</div>
	</div>

	<div class="taskbar">
		<button class="start" aria-label="开始菜单">{@render icon('windows', 'big')}</button>
		<label class="search">
			{@render icon('search', 'big')}
			<input type="text" placeholder="搜索" aria-label="搜索" />
			<svg class="promo" viewBox="0 0 60 30" aria-hidden="true">
				<path d="M2 27h24v-2H2z" fill="#8d86ad" />
				<path d="m8 4 4-2 7 12-5 3z" fill="#b9b6cc" />
				<path d="m7 3 4-2 2 3-4 2z" fill="#6f6a8c" />
				<path d="M17 8q9 6 4 17h-4q5-7-2-12zM4 19h12v2H4z" fill="#a19dbc" />
				<path d="m13 25 10-9" stroke="#49a5e0" stroke-width="2" />
				<path d="m43 13 8-4 4 8-8 4z" fill="#9c87cf" />
				<path d="m45 3 4-3 10 6-3 5zM35 20l4-4 11 8-4 5z" fill="#3f3767" />
				<path d="m48 4 8 4M38 19l9 7M50 2l-2 4M43 20l-3 4" stroke="#8e84bd" />
				<path d="m34 6 5 1 2 6-4-1zM40 10l5 4" fill="#6c5b9e" stroke="#6c5b9e" />
			</svg>
		</label>
		{#each apps as app}
			<button class="app" class:running={running.includes(app)} class:focus={app === 'powerpoint'} aria-label={app}>
				{#if app === 'solidworks'}
					<span class="sw"><b>SW</b><small>2022</small></span>
				{:else}
					{@render icon(app, 'app-icon')}
				{/if}
			</button>
		{/each}
		<div class="tray">
			{#each ['up', 'mic', 'battery', 'network', 'sound'] as name}
				{@render icon(name, 'mid')}
			{/each}
			<span class="ime">中</span>
			{@render icon('sogou', 'big')}
			<time>16:14<br />2023/8/18</time>
			{@render icon('note', 'big')}
		</div>
	</div>
</div>

<style>
	:global(body) {
		margin: 0;
	}

	.window {
		display: flex;
		flex-direction: column;
		height: 100vh;
		overflow: hidden;
		background: #e6e6e6;
		color: #333;
		font: 10px/14px 'Open Sans', 'Noto Sans CJK SC', sans-serif;
	}

	button {
		display: flex;
		align-items: center;
		justify-content: center;
		padding: 0;
		border: 0;
		background: none;
		color: inherit;
		font: inherit;
		white-space: nowrap;
	}

	.icon {
		display: block;
		flex: none;
		width: 12px;
		height: 12px;
		fill: none;
		stroke: currentColor;
	}

	.icon.tiny {
		width: 6px;
		height: 6px;
	}

	.icon.small {
		width: 11px;
		height: 11px;
	}

	.icon.big {
		width: 14px;
		height: 14px;
	}

	.icon.huge {
		width: 26px;
		height: 26px;
	}

	.icon.app-icon {
		width: 18px;
		height: 18px;
	}

	/* title bar and tabs */
	header {
		position: relative;
		flex: none;
		background: #b7472a;
		color: #fff;
		overflow: hidden;
	}

	.streaks {
		position: absolute;
		top: 0;
		right: 0;
		width: 400px;
		height: 54px;
	}

	.titlebar {
		position: relative;
		display: grid;
		grid-template-columns: 1fr auto 1fr;
		align-items: center;
		height: 27px;
	}

	.quick {
		display: flex;
		gap: 12px;
		padding-left: 17px;
	}

	.quick .faded {
		width: 22px;
		justify-content: flex-start;
		opacity: 0.3;
	}

	.account {
		display: flex;
		align-items: center;
		justify-content: flex-end;
		padding-right: 13px;
	}

	.account button {
		width: 12px;
		margin-left: 26px;
	}

	.account .avatar {
		width: 20px;
		height: 20px;
		margin-left: 7px;
	}

	nav {
		display: flex;
		height: 27px;
	}

	nav button {
		padding: 0 9px;
	}

	nav .file {
		width: 51px;
	}

	nav .open {
		background: #f3f3f3;
		color: #b7472a;
	}

	nav .tell {
		gap: 9px;
	}

	nav .feedback {
		margin-left: auto;
		padding-right: 12px;
	}

	.brand {
		position: absolute;
		top: 24px;
		right: 22px;
		display: flex;
		gap: 11px;
		color: #fff;
		font: 600 26px/48px 'Open Sans', sans-serif;
		opacity: 0.72;
	}

	.brand svg {
		width: 95px;
		height: 32px;
		fill: none;
		stroke: #fff;
	}

	/* ribbon */
	.ribbon {
		position: relative;
		display: grid;
		grid-template-columns: 106px 110px 211px 272px 279px 72px 48px 1fr;
		flex: none;
		height: 77px;
		border-bottom: 1px solid #d2d2d2;
		background: #f3f3f3;
	}

	.group {
		position: relative;
		border-right: 1px solid #d6d6d6;
	}

	.group footer {
		height: 16px;
		line-height: 16px;
		text-align: center;
		color: #444;
	}

	.group:has(.launch) footer {
		padding-right: 14px;
	}

	.launch {
		position: absolute;
		right: 3px;
		bottom: 3px;
	}

	.body {
		height: 60px;
		padding-top: 1px;
	}

	.clip {
		display: flex;
		gap: 6px;
		padding-left: 8px;
	}

	.clipboard {
		gap: 2px;
	}

	.pages {
		gap: 8px;
		padding-left: 10px;
	}

	.off,
	.off button {
		color: #b4b4b4;
	}

	.large {
		flex-direction: column;
		justify-content: flex-start;
		width: 34px;
		padding-top: 5px;
	}

	.large span {
		line-height: 14px;
	}

	.large span + .icon {
		margin-top: 3px;
	}

	.large .line {
		display: flex;
		align-items: center;
		gap: 4px;
		line-height: 12px;
	}

	.stack {
		display: flex;
		flex-direction: column;
	}

	.command {
		justify-content: flex-start;
		gap: 4px;
		height: 20px;
	}

	.rows {
		display: flex;
		flex-direction: column;
		gap: 6px;
	}

	.row {
		display: flex;
		align-items: center;
		height: 20px;
	}

	.body.rows {
		height: 53px;
		padding: 8px 0 0 6px;
	}

	.row button {
		width: 20px;
	}

	.row .wide {
		width: 32px;
		gap: 4px;
	}

	.row .rule {
		width: 1px;
		height: 16px;
		margin: 0 2px;
		background: #dadada;
	}

	.letters {
		font-size: 11px;
	}

	.letters s {
		font-size: 9px;
	}

	.letters em {
		font-family: 'Liberation Serif', serif;
		font-weight: 700;
	}

	select {
		appearance: none;
		height: 20px;
		border: 1px solid #d2d2d2;
		border-radius: 0;
		background: #e6e6e6;
	}

	.family {
		width: 93px;
	}

	.points {
		width: 43px;
		margin-right: 4px;
	}

	.para {
		gap: 4px;
	}

	.para .rows {
		width: 145px;
		padding-top: 7px;
	}

	.gallery {
		display: flex;
		height: 52px;
		margin-top: 3px;
		border: 1px solid #c8c8c8;
		background: #fff;
		color: #555;
	}

	.shapes {
		display: grid;
		grid-template-columns: repeat(6, 16px);
		place-items: center;
	}

	.spin {
		display: grid;
		grid-template-rows: repeat(3, 1fr);
		width: 11px;
		border-left: 1px solid #d0d0d0;
		font-size: 8px;
		line-height: 16px;
		text-align: center;
	}

	.spin span:first-child {
		background: #e2e2e2;
	}

	.spin span + span {
		border-top: 1px solid #d0d0d0;
	}

	.draw {
		gap: 2px;
	}

	.draw .large.off {
		width: 40px;
	}

	.draw .stack {
		padding-left: 4px;
	}

	.edit {
		padding-left: 9px;
	}

	.swap {
		width: 12px;
		color: #3f5c8c;
		font-size: 7px;
		line-height: 7px;
	}

	.addin {
		padding-left: 6px;
	}

	.collapse {
		align-self: end;
		justify-self: end;
		padding: 0 7px 1px 0;
	}

	/* slide list and editing area */
	main {
		display: flex;
		flex: 1;
		min-height: 0;
	}

	aside {
		width: 167px;
		overflow: hidden;
		padding-top: 7px;
	}

	.slot {
		display: flex;
		height: 79px;
		padding-left: 4px;
		color: #505050;
		font-size: 13px;
		line-height: 14px;
	}

	.slot span {
		width: 34px;
	}

	.thumb {
		width: 110px;
		height: 62px;
		margin-top: 3px;
		border: 1px solid #d4d4d4;
		background: #fff;
	}

	.current {
		color: #c14a3b;
	}

	.current .thumb {
		margin: 2px 0 0 -2px;
		border: 2px solid #7b1528;
	}

	.thin {
		fill: none;
		stroke: #555;
		stroke-width: 0.6;
	}

	.thumb .thin {
		stroke: #999;
		stroke-width: 0.5;
	}

	.blue {
		fill: none;
		stroke: #66f;
		stroke-dasharray: 2 1;
	}

	.solid {
		fill: none;
		stroke: #111;
	}

	.scroll {
		display: flex;
		flex-direction: column;
		flex: none;
		width: 13px;
		margin-right: 3px;
		padding-top: 1px;
		background: #f1f1f1;
	}

	.scroll button {
		height: 13px;
		border: 1px solid #aaa;
		background: #fff;
		color: #222;
		font: 7px/7px 'DejaVu Sans', sans-serif;
	}

	.scroll .before {
		flex: 391;
	}

	.scroll .after {
		flex: 97;
	}

	.scroll .grip {
		height: 18px;
		border: 1px solid #aaa;
		background: #fff;
	}

	.scroll.right {
		margin: 0;
		padding-bottom: 18px;
	}

	.right .before {
		flex: 358;
	}

	.right .after {
		flex: 90;
	}

	.right .grip {
		height: 12px;
	}

	.scroll .jump {
		height: 14px;
		border-color: transparent;
		background: none;
	}

	.stage {
		position: relative;
		flex: 1;
		min-width: 0;
		padding: 9px 83px 0 85px;
	}

	.slide {
		display: grid;
		grid-template-columns: 210fr 705fr;
		aspect-ratio: 915 / 515;
		background: #fff;
		color: #111;
	}

	.notes {
		min-width: 0;
		padding-top: 12px;
	}

	.heading {
		display: flex;
		align-items: center;
		gap: 13px;
	}

	.badge {
		width: 82px;
		height: 45px;
		background: #0070c0;
		box-shadow: 2px 2px 3px #999;
		color: #fff;
		font-size: 30px;
		font-weight: 300;
		line-height: 44px;
		text-align: center;
	}

	h1 {
		margin: 0;
		color: #f00;
		font-family: 'Noto Sans CJK SC', sans-serif;
		font-size: 22px;
		font-weight: 500;
		line-height: 30px;
		white-space: nowrap;
	}

	p {
		margin: 103px 0 0 15px;
		font-family: 'Noto Sans CJK SC', sans-serif;
		font-size: 19px;
		font-weight: 500;
		line-height: 23px;
		white-space: nowrap;
	}

	.drawing {
		display: block;
		width: 100%;
	}

	.dim {
		fill: #333;
		font: 8px 'Open Sans', 'Noto Sans CJK SC', sans-serif;
		text-anchor: middle;
	}

	.water {
		fill: #777;
		fill-opacity: 0.65;
		font: italic 23px 'Noto Sans CJK SC', sans-serif;
	}

	.water tspan {
		font-family: 'Liberation Mono', monospace;
		font-size: 19px;
	}

	.maker {
		fill: #222;
		font: 300 21px 'Noto Sans CJK SC', sans-serif;
	}

	.maker tspan {
		font-family: 'Open Sans', sans-serif;
		font-size: 17px;
	}

	.cursor {
		position: absolute;
		left: 333px;
		top: 434px;
		width: 16px;
		height: 20px;
	}

	/* status bar */
	.status {
		display: flex;
		align-items: center;
		flex: none;
		height: 18px;
		padding-left: 7px;
		border-top: 1px solid #d2d2d2;
		background: #f3f3f3;
	}

	.count {
		width: 145px;
	}

	.lang {
		margin: 0 14px 0 14px;
	}

	.status b {
		margin-left: 3px;
		font-weight: 600;
	}

	.views {
		display: flex;
		align-items: center;
		align-self: stretch;
		margin-left: auto;
		padding-right: 5px;
	}

	.views .text {
		gap: 3px;
		margin-right: 16px;
	}

	.views .view {
		width: 33px;
		height: 100%;
		color: #777;
	}

	.views .active {
		background: #c6c6c6;
	}

	.views .minus {
		margin-left: 7px;
	}

	.views input {
		appearance: none;
		width: 84px;
		height: 1px;
		margin: 0 5px;
		background: #555;
	}

	.views input::-webkit-slider-thumb {
		appearance: none;
		width: 4px;
		height: 10px;
		background: #333;
	}

	.percent {
		margin: 0 10px;
	}

	/* taskbar */
	.taskbar {
		display: flex;
		flex: none;
		height: 33px;
		background: #434343;
		color: #fff;
	}

	.start {
		width: 40px;
	}

	.search {
		display: flex;
		align-items: center;
		gap: 9px;
		width: 240px;
		box-sizing: border-box;
		padding: 0 4px 0 10px;
		background: #f2f2f4;
		color: #222;
	}

	.search input {
		flex: 1;
		min-width: 0;
		padding: 0;
		border: 0;
		background: none;
		font: 13px/18px 'Noto Sans CJK SC', sans-serif;
	}

	.search input::placeholder {
		color: #333;
	}

	.promo {
		width: 60px;
		height: 30px;
	}

	.app {
		width: 41px;
		border-bottom: 2px solid transparent;
	}

	.search + .app {
		margin-left: 2px;
	}

	.running {
		border-color: #76b9ed;
	}

	.focus {
		background: #696969;
		background-clip: padding-box;
	}

	.sw {
		display: grid;
		width: 19px;
		height: 19px;
		border-radius: 5px;
		background: #b3131b;
		font-size: 11px;
		line-height: 11px;
	}

	.sw small {
		font-size: 6px;
		font-weight: 700;
		line-height: 7px;
		text-align: right;
	}

	.tray {
		display: flex;
		align-items: center;
		gap: 8px;
		margin-left: auto;
		padding-right: 21px;
	}

	.ime {
		margin-right: 2px;
		font-size: 12px;
	}

	time {
		width: 60px;
		margin: 0 3px 0 1px;
		line-height: 15px;
		font-size: 11px;
		text-align: center;
	}
</style>
